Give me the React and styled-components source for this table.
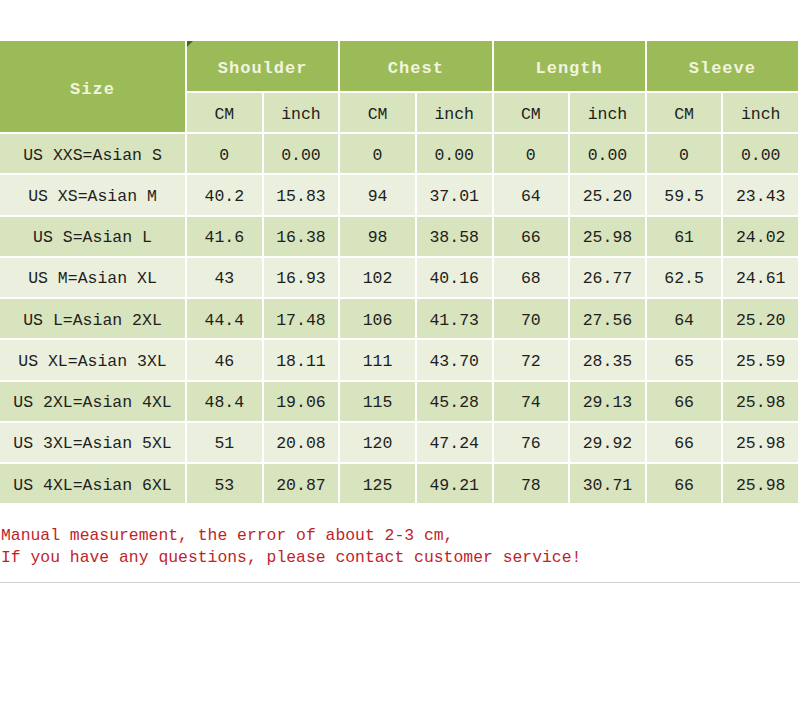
import React from 'react'
import styled, { createGlobalStyle } from 'styled-components'

const GlobalStyle = createGlobalStyle`
  html, body {
    margin: 0;
    padding: 0;
    background: #fff;
  }
  body {
    width: 800px;
    overflow: hidden;
  }
`

const Page = styled.div`
  width: 800px;
  overflow: hidden;
  padding-top: 41px;
  font-family: 'Liberation Mono', 'DejaVu Sans Mono', monospace;
`

const Grid = styled.div`
  display: grid;
  width: 810px;
  grid-template-columns: 185px repeat(8, 74.625px) 10px;
  grid-template-rows: 50px 39px repeat(9, 39.25px);
  gap: 2px;
  background: #fff;
`

const HeadCell = styled.div`
  position: relative;
  display: flex;
  align-items: center;
  justify-content: center;
  padding-top: 5px;
  background: #9bbb59;
  color: #f2f4de;
  font-weight: bold;
  font-size: 17px;
  letter-spacing: 1px;
  grid-column: ${p => p.$col || 'auto'};
  grid-row: ${p => p.$row || 'auto'};
`

const Marker = styled.span`
  position: absolute;
  top: 0;
  left: 0;
  width: 0;
  height: 0;
  border-top: 6px solid #3f6b1e;
  border-right: 6px solid transparent;
`

const Cell = styled.div`
  display: flex;
  align-items: center;
  justify-content: center;
  padding-top: 3px;
  background: ${p => (p.$light ? '#eaf0dd' : '#d8e4bd')};
  color: #1e1e1e;
  font-size: 16.5px;
  white-space: nowrap;
`

const Note = styled.div`
  margin-top: 22px;
  padding-left: 1px;
  color: #c01f2b;
  font-size: 16.4px;
  line-height: 22px;
  white-space: pre;
`

const Rule = styled.div`
  margin-top: 13px;
  height: 1px;
  background: #cfcfcf;
`

const rows = [
  ['US XXS=Asian S', '0', '0.00', '0', '0.00', '0', '0.00', '0', '0.00'],
  ['US XS=Asian M', '40.2', '15.83', '94', '37.01', '64', '25.20', '59.5', '23.43'],
  ['US S=Asian L', '41.6', '16.38', '98', '38.58', '66', '25.98', '61', '24.02'],
  ['US M=Asian XL', '43', '16.93', '102', '40.16', '68', '26.77', '62.5', '24.61'],
  ['US L=Asian 2XL', '44.4', '17.48', '106', '41.73', '70', '27.56', '64', '25.20'],
  ['US XL=Asian 3XL', '46', '18.11', '111', '43.70', '72', '28.35', '65', '25.59'],
  ['US 2XL=Asian 4XL', '48.4', '19.06', '115', '45.28', '74', '29.13', '66', '25.98'],
  ['US 3XL=Asian 5XL', '51', '20.08', '120', '47.24', '76', '29.92', '66', '25.98'],
  ['US 4XL=Asian 6XL', '53', '20.87', '125', '49.21', '78', '30.71', '66', '25.98']
]

const groups = ['Shoulder', 'Chest', 'Length', 'Sleeve']

const App = () => {
  return (
    <Page>
      <GlobalStyle />
      <Grid>
        <HeadCell $row='1 / 3'>Size</HeadCell>
        {groups.map((g, i) => (
          <HeadCell key={g} $col='span 2'>
            {i === 0 && <Marker />}
            {g}
          </HeadCell>
        ))}
        <HeadCell />
        {groups.map(g => (
          <React.Fragment key={g}>
            <Cell>CM</Cell>
            <Cell>inch</Cell>
          </React.Fragment>
        ))}
        <Cell />
        {rows.map((r, i) => (
          <React.Fragment key={r[0]}>
            {r.map((v, j) => (
              <Cell key={j} $light={i % 2 === 1}>
                {v}
              </Cell>
            ))}
            <Cell $light={i % 2 === 1} />
          </React.Fragment>
        ))}
      </Grid>
      <Note>
        {'Manual measurement, the error of about 2-3 cm,\nIf you have any questions, please contact customer service!'}
      </Note>
      <Rule />
    </Page>
  )
}

export default App
